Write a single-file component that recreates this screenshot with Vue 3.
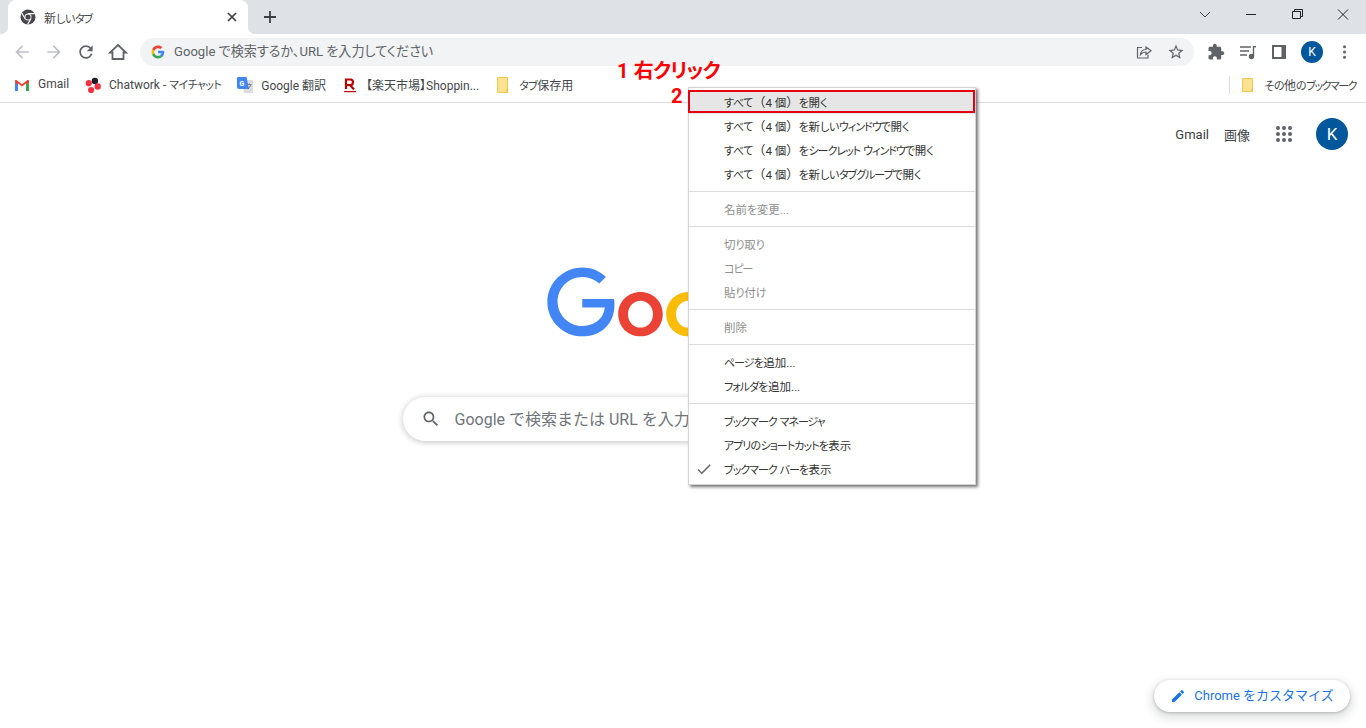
<script setup>
const bookmarks = [
  { id: 'gmail', label: 'Gmail' },
  { id: 'chatwork', label: 'Chatwork - マイチャット' },
  { id: 'translate', label: 'Google 翻訳' },
  { id: 'rakuten', label: '【楽天市場】Shoppin...' },
  { id: 'folder', label: 'タブ保存用' }
]

// menu groups, separated by a rule
const menuGroups = [
  [
    { label: 'すべて（4 個）を開く', active: true },
    { label: 'すべて（4 個）を新しいウィンドウで開く' },
    { label: 'すべて（4 個）をシークレット ウィンドウで開く' },
    { label: 'すべて（4 個）を新しいタブグループで開く' }
  ],
  [{ label: '名前を変更...', disabled: true }],
  [
    { label: '切り取り', disabled: true },
    { label: 'コピー', disabled: true },
    { label: '貼り付け', disabled: true }
  ],
  [{ label: '削除', disabled: true }],
  [{ label: 'ページを追加...' }, { label: 'フォルダを追加...' }],
  [
    { label: 'ブックマーク マネージャ' },
    { label: 'アプリのショートカットを表示' },
    { label: 'ブックマーク バーを表示', checked: true }
  ]
]

const appDots = []
for (const y of [4, 10, 16]) {
  for (const x of [4, 10, 16]) appDots.push({ x, y })
}

// the UI font of the original has narrow kana, so split text into runs and tighten those
function runs(text) {
  return text.match(/[ァ-ヶー]+|[ぁ-ん]+|[（）]|[^ァ-ヶーぁ-ん（）]+/g).map((t) => {
    let cls = ''
    if (/^[ァ-ヶー]/.test(t)) cls = 'kata'
    else if (/^[ぁ-ん]/.test(t)) cls = 'hira'
    else if (/^[（）]/.test(t)) cls = 'paren'
    return { t, cls }
  })
}
</script>

<template>
  <div class="browser">
    <!-- tab strip -->
    <div class="tabstrip">
      <div class="tab">
        <svg class="tab-favicon" width="16" height="16" viewBox="0 0 16 16">
          <circle cx="8" cy="8" r="7.5" fill="#45474a" />
          <path d="M8 4.6H14.6M5.1 9.7L1.8 4M10.9 9.7L7.6 15.4" stroke="#fff" stroke-width="1.1" fill="none" />
          <circle cx="8" cy="8" r="3.5" fill="#fff" />
          <circle cx="8" cy="8" r="2.6" fill="#45474a" />
        </svg>
        <span class="tab-title"><span v-for="(r, i) in runs('新しいタブ')" :key="i" :class="r.cls">{{ r.t }}</span></span>
        <svg class="tab-close" width="10" height="10" viewBox="0 0 10 10">
          <path d="M1 1L9 9M9 1L1 9" stroke="#3c4043" stroke-width="1.7" />
        </svg>
      </div>
      <svg class="new-tab" width="14" height="14" viewBox="0 0 14 14">
        <path d="M7 1V13M1 7H13" stroke="#3c4043" stroke-width="1.8" />
      </svg>
      <div class="window-controls">
        <svg width="46" height="28" viewBox="0 0 46 28">
          <path d="M18 12L23 17L28 12" stroke="#3c4043" fill="none" />
        </svg>
        <svg width="46" height="28" viewBox="0 0 46 28">
          <path d="M18 14.5H28" stroke="#202124" />
        </svg>
        <svg width="46" height="28" viewBox="0 0 46 28">
          <path d="M18.5 11.5H26.5V18.5H18.5ZM20.5 11.5V9.5H28.5V16.5H26.5" stroke="#202124" fill="none" />
        </svg>
        <svg width="46" height="28" viewBox="0 0 46 28">
          <path d="M18 9.5L28 19.5M28 9.5L18 19.5" stroke="#202124" />
        </svg>
      </div>
    </div>

    <!-- toolbar -->
    <div class="toolbar">
      <div class="nav-buttons">
        <svg width="20" height="20" viewBox="0 0 24 24" fill="#bdc1c6"><path d="M20 11H7.83l5.59-5.59L12 4l-8 8 8 8 1.41-1.41L7.83 13H20v-2z" /></svg>
        <svg width="20" height="20" viewBox="0 0 24 24" fill="#bdc1c6"><path d="M12 4l-1.41 1.41L16.17 11H4v2h12.17l-5.58 5.59L12 20l8-8z" /></svg>
        <svg width="20" height="20" viewBox="0 0 24 24" fill="#5f6368"><path d="M17.65 6.35C16.2 4.9 14.21 4 12 4c-4.42 0-7.99 3.58-7.99 8s3.57 8 7.99 8c3.73 0 6.84-2.55 7.73-6h-2.08c-.82 2.33-3.04 4-5.65 4-3.31 0-6-2.69-6-6s2.69-6 6-6c1.66 0 3.14.69 4.22 1.78L13 11h7V4l-2.35 2.35z" /></svg>
        <svg width="20" height="20" viewBox="0 0 20 20" fill="none" stroke="#5f6368" stroke-width="1.8"><path d="M10 3L18 10.5H15.5V17H4.500V10.500H2Z" stroke-linejoin="miter" /></svg>
      </div>
      <div class="omnibox">
        <svg width="14" height="14" viewBox="0 0 24 24">
          <path fill="#4285F4" d="M22.56 12.25c0-.78-.07-1.53-.2-2.25H12v4.26h5.92c-.26 1.37-1.04 2.53-2.21 3.31v2.77h3.57c2.08-1.92 3.28-4.74 3.28-8.09z" />
          <path fill="#34A853" d="M12 23c2.97 0 5.46-.98 7.28-2.66l-3.57-2.77c-.98.66-2.23 1.06-3.71 1.06-2.86 0-5.29-1.93-6.16-4.53H2.18v2.84C3.99 20.53 7.7 23 12 23z" />
          <path fill="#FBBC05" d="M5.84 14.09c-.22-.66-.35-1.36-.35-2.09s.13-1.43.35-2.09V7.07H2.18C1.43 8.55 1 10.22 1 12s.43 3.45 1.18 4.93l2.85-2.22.81-.62z" />
          <path fill="#EA4335" d="M12 5.38c1.62 0 3.06.56 4.21 1.64l3.15-3.15C17.45 2.09 14.97 1 12 1 7.7 1 3.99 3.47 2.18 7.07l3.66 2.84c.87-2.6 3.3-4.53 6.16-4.53z" />
        </svg>
        <span class="omnibox-text">Google で検索するか、URL を入力してください</span>
        <svg class="omni-share" width="16" height="16" viewBox="0 0 16 16" fill="none" stroke="#5f6368" stroke-width="1.2">
          <path d="M6 3.500H1.500V14H12V10.500" />
          <path d="M4.500 10.500C5 7 7.500 5.500 10 5.500V3L15 6.800L10 10.500V8C8 8 6 8.700 4.500 10.500Z" />
        </svg>
        <svg class="omni-star" width="18" height="18" viewBox="0 0 24 24" fill="#5f6368"><path d="M22 9.24l-7.19-.62L12 2 9.19 8.63 2 9.24l5.46 4.73L5.82 21 12 17.27 18.18 21l-1.63-7.03L22 9.24zM12 15.4l-3.76 2.27 1-4.28-3.32-2.88 4.38-.38L12 6.1l1.710 4.04 4.38.38-3.32 2.88 1 4.28L12 15.4z" /></svg>
      </div>
      <div class="tool-buttons">
        <svg width="18" height="18" viewBox="0 0 24 24" fill="#5f6368"><path d="M20.5 11H19V7c0-1.100-.9-2-2-2h-4V3.500C13 2.120 11.880 1 10.500 1S8 2.120 8 3.500V5H4c-1.100 0-1.990.9-1.990 2v3.800H3.500c1.490 0 2.700 1.210 2.700 2.700s-1.210 2.700-2.700 2.700H2V20c0 1.100.9 2 2 2h3.800v-1.500c0-1.490 1.210-2.700 2.700-2.700 1.490 0 2.700 1.210 2.700 2.700V22H17c1.100 0 2-.9 2-2v-4h1.500c1.380 0 2.500-1.120 2.500-2.500S21.880 11 20.500 11z" /></svg>
        <svg width="18" height="18" viewBox="0 0 18 18" fill="none" stroke="#5f6368" stroke-width="1.4">
          <path d="M1 4H12M1 8H10M1 12H8" />
          <path d="M14.500 3.500V13" />
          <path d="M14 3.700H17" />
          <circle cx="12.500" cy="13.500" r="2" fill="#5f6368" />
        </svg>
        <svg width="16" height="16" viewBox="0 0 16 16">
          <path fill="#5f6368" d="M1 1H15V15H1Z" />
          <path fill="#fff" d="M3 3H10.500V13H3Z" />
        </svg>
        <span class="avatar avatar-small">K</span>
        <svg width="16" height="16" viewBox="0 0 16 16" fill="#5f6368">
          <circle cx="7.500" cy="2.800" r="1.500" />
          <circle cx="7.500" cy="8" r="1.500" />
          <circle cx="7.500" cy="13.200" r="1.500" />
        </svg>
      </div>
    </div>

    <!-- bookmarks bar -->
    <div class="bookmarks">
      <div v-for="b in bookmarks" :key="b.id" class="bookmark">
        <span class="bookmark-icon">
          <svg v-if="b.id === 'gmail'" width="14" height="11" viewBox="0 0 14 11">
            <path fill="#4285f4" d="M0 1.200V11H3V3.500Z" />
            <path fill="#34a853" d="M14 1.200V11H11V3.500Z" />
            <path fill="#ea4335" d="M0 0.800C0 0 1 -0.300 1.800 0.300L7 4.300L12.200 0.300C13 -0.300 14 0 14 0.800V2.500L11 4.800V3.400L7 6.500L3 3.400V4.800L0 2.500Z" />
          </svg>
          <svg v-else-if="b.id === 'chatwork'" width="17" height="17" viewBox="0 0 17 17">
            <circle cx="10.500" cy="3.600" r="3.400" fill="#1d1d2b" />
            <circle cx="4" cy="6" r="3.300" fill="#f0333f" />
            <circle cx="13.500" cy="9.500" r="3.400" fill="#f0333f" />
            <circle cx="6.500" cy="13.300" r="3.300" fill="#f0333f" />
          </svg>
          <svg v-else-if="b.id === 'translate'" width="16" height="16" viewBox="0 0 16 16">
            <path fill="#dadce0" d="M5 3H16V16H7Z" />
            <path fill="#4285f4" d="M1 0H9.500L12 12H2C1 12 0 11 0 10V1C0 .5 .5 0 1 0Z" />
            <text x="2.500" y="8.500" font-size="7" font-weight="700" fill="#fff" font-family="Roboto, sans-serif">G</text>
            <path d="M10.500 7.500H14.500M12.500 6.500V7.500M11 12L14 8" stroke="#5f6368" stroke-width=".8" fill="none" />
          </svg>
          <svg v-else-if="b.id === 'rakuten'" width="12" height="15" viewBox="0 0 12 15" fill="none" stroke="#bf0000">
            <path stroke-width="2.200" d="M2 11V1.500H6.500C9.800 1.500 9.800 7 6.500 7H2M6 7L10 11.500" />
            <path stroke-width="1.200" d="M0 13.600H12" />
          </svg>
          <svg v-else width="12" height="16" viewBox="0 0 12 16">
            <path fill="#fde293" stroke="#f1c84b" d="M.5 .5H10.500V15.500H.5Z" />
            <path fill="#f1c84b" d="M9 12H11V15H9Z" />
          </svg>
        </span>
        <span class="bookmark-label"><span v-for="(r, i) in runs(b.label)" :key="i" :class="r.cls">{{ r.t }}</span></span>
      </div>
      <div class="bookmarks-other">
        <span class="bookmark-divider"></span>
        <div class="bookmark">
          <svg width="12" height="14" viewBox="0 0 12 14">
            <path fill="#fde293" stroke="#f1c84b" d="M.5 .5H10.500V13.500H.5Z" />
            <path fill="#f1c84b" d="M9 10.500H11V13.500H9Z" />
          </svg>
          <span class="bookmark-label other-label"><span v-for="(r, i) in runs('その他のブックマーク')" :key="i" :class="r.cls">{{ r.t }}</span></span>
        </div>
      </div>
    </div>

    <!-- new tab page -->
    <main class="page">
      <nav class="page-links">
        <span class="page-link">Gmail</span>
        <span class="page-link">画像</span>
        <svg class="apps" width="20" height="20" viewBox="0 0 20 20" fill="#5f6368">
          <circle v-for="d in appDots" :key="d.x + '-' + d.y" :cx="d.x" :cy="d.y" r="2" />
        </svg>
        <span class="avatar avatar-large">K</span>
      </nav>

      <svg class="logo" width="272" height="92" viewBox="0 0 272 92">
        <path fill="#EA4335" d="M115.750 47.180c0 12.770-9.990 22.180-22.250 22.180s-22.250-9.410-22.250-22.180C71.250 34.320 81.240 25 93.500 25s22.250 9.320 22.250 22.180zm-9.740 0c0-7.980-5.790-13.440-12.510-13.440S80.990 39.200 80.990 47.180c0 7.900 5.790 13.440 12.510 13.440s12.510-5.550 12.510-13.440z" />
        <path fill="#FBBC05" d="M163.750 47.180c0 12.770-9.990 22.180-22.250 22.180s-22.250-9.410-22.250-22.180c0-12.850 9.990-22.180 22.250-22.180s22.250 9.320 22.250 22.180zm-9.740 0c0-7.980-5.790-13.440-12.510-13.440s-12.510 5.460-12.510 13.440c0 7.900 5.790 13.440 12.510 13.440s12.510-5.550 12.510-13.440z" />
        <path fill="#4285F4" d="M35.290 41.410V32H67c.31 1.640.47 3.580.47 5.680 0 7.060-1.930 15.790-8.150 22.010-6.050 6.300-13.780 9.660-24.020 9.660C16.320 69.350.36 53.890.36 34.910.36 15.930 16.320.47 35.300.47c10.500 0 17.980 4.120 23.600 9.490l-6.640 6.640c-4.030-3.780-9.490-6.720-16.970-6.720-13.860 0-24.700 11.170-24.700 24.530 0 13.360 10.840 24.530 24.700 24.530 8.990 0 14.110-3.610 17.390-6.890 2.660-2.660 4.410-6.460 5.100-11.650l-22.490.01z" />
      </svg>

      <div class="searchbox">
        <svg width="20" height="20" viewBox="0 0 24 24" fill="#5f6368"><path d="M15.500 14h-.79l-.28-.27C15.410 12.590 16 11.110 16 9.500 16 5.910 13.090 3 9.500 3S3 5.910 3 9.500 5.910 16 9.500 16c1.610 0 3.090-.59 4.230-1.570l.27.28v.79l5 4.990L20.490 19l-4.990-5zm-6 0C7.010 14 5 11.990 5 9.500S7.010 5 9.500 5 14 7.010 14 9.500 11.990 14 9.500 14z" /></svg>
        <span class="searchbox-text">Google で検索または URL を入力</span>
      </div>

      <button class="customize">
        <svg width="16" height="16" viewBox="0 0 24 24" fill="#1a73e8"><path d="M3 17.250V21h3.750L17.810 9.940l-3.750-3.750L3 17.250zM20.710 7.040c.39-.39.39-1.020 0-1.410l-2.340-2.340c-.39-.39-1.020-.39-1.410 0l-1.830 1.830 3.750 3.750 1.830-1.830z" /></svg>
        <span class="customize-text">Chrome をカスタマイズ</span>
      </button>
    </main>

    <!-- bookmark context menu -->
    <div class="menu">
      <div v-for="(group, g) in menuGroups" :key="g" class="menu-group">
        <div
          v-for="item in group"
          :key="item.label"
          class="menu-item"
          :class="{ active: item.active, disabled: item.disabled }"
        >
          <svg v-if="item.checked" class="menu-check" width="18" height="18" viewBox="0 0 24 24" fill="#666"><path d="M9 16.170L4.830 12l-1.420 1.410L9 19 21 7l-1.410-1.410z" /></svg>
          <span v-for="(r, i) in runs(item.label)" :key="i" :class="r.cls">{{ r.t }}</span>
        </div>
      </div>
    </div>

    <!-- annotations drawn over the screenshot -->
    <div class="note note-1">1 右クリック</div>
    <div class="note note-2">2</div>
    <div class="note-box"></div>
  </div>
</template>

<style>
html, body { margin: 0; overflow: hidden; }
</style>

<style scoped>
.browser {
  position: relative;
  height: 100vh;
  display: flex;
  flex-direction: column;
  overflow: hidden;
  background: #fff;
  font-family: Roboto, "Noto Sans CJK JP", sans-serif;
  font-size: 12px;
  font-feature-settings: "palt";
  color: #3c4043;
}

.kata { font-size: 11px; letter-spacing: -1px; }
.hira { font-size: 11px; letter-spacing: -.4px; }
.paren { font-size: 12.500px; font-feature-settings: normal; }

.tabstrip {
  height: 34px;
  flex: none;
  display: flex;
  align-items: center;
  background: #dee1e6;
  padding-left: 8px;
}
.tab {
  position: relative;
  width: 240px;
  height: 34px;
  box-sizing: border-box;
  display: flex;
  align-items: center;
  padding: 0 11px 0 12px;
  background: #fff;
  border-radius: 8px 8px 0 0;
}
.tab::before,
.tab::after {
  content: "";
  position: absolute;
  bottom: 0;
  width: 8px;
  height: 8px;
}
.tab::before {
  left: -8px;
  background: radial-gradient(circle at 0 0, transparent 8px, #fff 8.500px);
}
.tab::after {
  right: -8px;
  background: radial-gradient(circle at 100% 0, transparent 8px, #fff 8.500px);
}
.tab-favicon { flex: none; }
.tab-title {
  margin-left: 8px;
  flex: 1;
  color: #45474a;
}
.new-tab { margin-left: 15px; }
.window-controls {
  margin-left: auto;
  display: flex;
  align-self: flex-start;
}
.window-controls svg { display: block; }

.toolbar {
  height: 35px;
  flex: none;
  display: flex;
  align-items: center;
  background: #fff;
}
.nav-buttons {
  display: flex;
  gap: 12px;
  padding-left: 12px;
}
.omnibox {
  margin-left: 12px;
  width: 1054px;
  height: 28px;
  box-sizing: border-box;
  display: flex;
  align-items: center;
  padding: 0 9px 0 11px;
  background: #f1f3f4;
  border-radius: 14px;
  flex: none;
}
.omnibox-text {
  margin: 0 0 2px 9px;
  font-size: 13.100px;
  color: #5f6368;
  flex: 1;
}
.omni-star { margin-left: 15px; }
.tool-buttons {
  margin-left: 13px;
  display: flex;
  align-items: center;
  gap: 14px;
}
.avatar {
  display: flex;
  align-items: center;
  justify-content: center;
  border-radius: 50%;
  background: #01579b;
  color: #fff;
  flex: none;
}
.avatar-small {
  width: 22px;
  height: 22px;
  font-size: 12px;
}
.avatar-large {
  width: 32px;
  height: 32px;
  font-size: 17px;
}

.bookmarks {
  height: 34px;
  flex: none;
  box-sizing: border-box;
  display: flex;
  align-items: center;
  gap: 16px;
  padding: 0 10px 1px 14px;
  border-bottom: 1px solid #dadce0;
  color: #45474a;
}
.bookmark {
  display: flex;
  align-items: center;
  gap: 8px;
  white-space: nowrap;
}
.bookmark-icon {
  width: 16px;
  display: flex;
  justify-content: center;
}
.bookmark-label { margin-bottom: 2px; }
.bookmark-label .kata { letter-spacing: -.6px; }
.bookmark-label.other-label .kata { letter-spacing: -1.500px; }
.bookmarks-other {
  margin-left: auto;
  display: flex;
  align-items: center;
  gap: 12px;
}
.bookmark-divider {
  width: 1px;
  height: 18px;
  background: #dadce0;
}
.other-label { margin-left: 2px; }

.page {
  flex: 1;
  display: flex;
  flex-direction: column;
  align-items: center;
}
.page-links {
  align-self: stretch;
  height: 32px;
  margin-top: 15px;
  padding-right: 18px;
  display: flex;
  justify-content: flex-end;
  align-items: center;
  font-size: 13px;
  font-feature-settings: normal;
  color: #3c4043;
}
.page-link { margin-right: 15px; }
.apps { margin: 0 22px 0 9px; }
.logo { margin-top: 117px; flex: none; }
.searchbox {
  margin-top: 38px;
  width: 561px;
  height: 44px;
  box-sizing: border-box;
  display: flex;
  align-items: center;
  gap: 14px;
  padding-left: 18px;
  border-radius: 22px;
  background: #fff;
  box-shadow: 0 1px 6px rgba(32, 33, 36, .28);
  font-size: 16px;
  font-feature-settings: normal;
  color: #70757a;
  white-space: nowrap;
}
.searchbox-text { margin-bottom: 2px; }
.customize {
  margin-top: auto;
  margin-bottom: 16px;
  align-self: flex-end;
  margin-right: 16px;
  width: 196px;
  height: 32px;
  display: flex;
  align-items: center;
  justify-content: center;
  gap: 8px;
  padding: 0 0 1px;
  border: 0;
  border-radius: 16px;
  background: #fff;
  box-shadow: 0 1px 3px rgba(60, 64, 67, .3), 0 4px 8px 3px rgba(60, 64, 67, .15);
  font: inherit;
  font-size: 13px;
  font-feature-settings: normal;
  color: #1a73e8;
}
.customize-text { margin-bottom: 2px; }

.menu {
  position: absolute;
  left: 688px;
  top: 87px;
  width: 288px;
  box-sizing: border-box;
  padding: 2px 0 3px;
  background: #fff;
  border: 1px solid #d4d4d4;
  box-shadow: 2px 2px 3px rgba(0, 0, 0, .55);
  font-size: 11.500px;
  color: #333;
}
.menu-group + .menu-group {
  margin-top: 5px;
  padding-top: 5px;
  border-top: 1px solid #dcdcdc;
}
.menu-item {
  position: relative;
  height: 24px;
  line-height: 26px;
  padding-left: 35px;
  white-space: nowrap;
}
.menu-item.active { background: #e6e6e6; }
.menu-item.disabled { color: #8e8e8e; }
.menu-check {
  position: absolute;
  left: 6px;
  top: 3px;
}

.note {
  position: absolute;
  color: #f00;
  font-weight: 700;
  font-size: 20px;
  line-height: 24px;
  white-space: nowrap;
  text-shadow: 0 0 2px #fff, 0 0 2px #fff;
}
.note-1 { left: 617px; top: 59px; word-spacing: 2px; letter-spacing: -.8px; }
.note-2 { left: 671px; top: 84px; }
.note-box {
  position: absolute;
  left: 688px;
  top: 90px;
  width: 287px;
  height: 23px;
  box-sizing: border-box;
  border: 2px solid #e60012;
}
</style>
